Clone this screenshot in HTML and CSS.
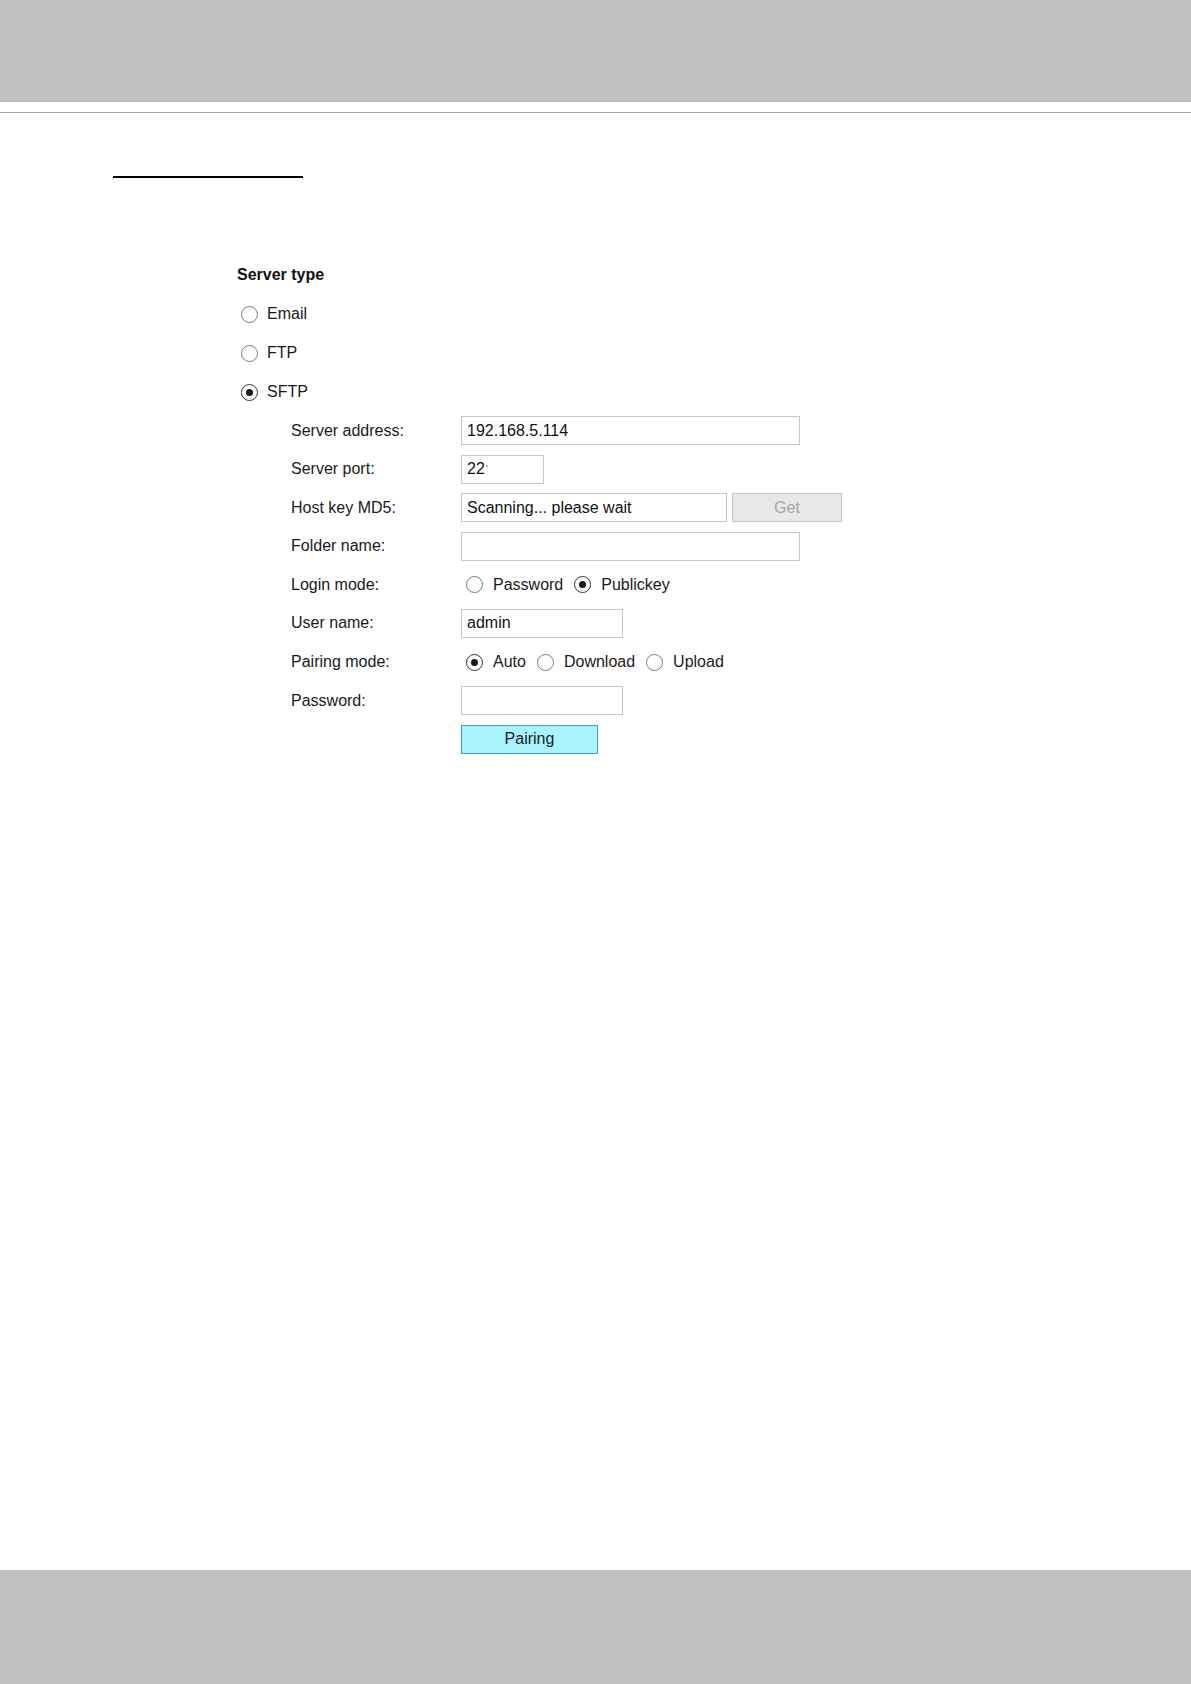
FILE: index.html
```html
<!DOCTYPE html>
<html>
<head>
<meta charset="utf-8">
<link rel="stylesheet" href="styles.css">
</head>
<body>
<div class="page">
  <div class="header"></div>
  <div class="rule"></div>
  <main class="main">
    <div class="heading-line"></div>
    <section class="server">
      <div class="title">Server type</div>
      <div class="opt"><span class="radio"></span><span class="opt-text">Email</span></div>
      <div class="opt"><span class="radio"></span><span class="opt-text">FTP</span></div>
      <div class="opt"><span class="radio on"></span><span class="opt-text">SFTP</span></div>

      <div class="form">
        <div class="label">Server address:</div>
        <div class="field"><div class="input w-long">192.168.5.114</div></div>

        <div class="label">Server port:</div>
        <div class="field"><div class="input w-port">22<span class="caret">'</span></div></div>

        <div class="label">Host key MD5:</div>
        <div class="field"><div class="input w-host">Scanning... please wait</div><div class="btn-get">Get</div></div>

        <div class="label">Folder name:</div>
        <div class="field"><div class="input w-long"></div></div>

        <div class="label">Login mode:</div>
        <div class="field radios">
          <span class="radio"></span><span class="r-text">Password</span>
          <span class="radio on"></span><span class="r-text">Publickey</span>
        </div>

        <div class="label">User name:</div>
        <div class="field"><div class="input w-short">admin</div></div>

        <div class="label">Pairing mode:</div>
        <div class="field radios">
          <span class="radio on"></span><span class="r-text">Auto</span>
          <span class="radio"></span><span class="r-text">Download</span>
          <span class="radio"></span><span class="r-text">Upload</span>
        </div>

        <div class="label">Password:</div>
        <div class="field"><div class="input w-short"></div></div>

        <div class="label"></div>
        <div class="field"><div class="btn-pair">Pairing</div></div>
      </div>
    </section>
  </main>
  <div class="footer"></div>
</div>
</body>
</html>
```
FILE: styles.css
```css
html, body {
  margin: 0;
  padding: 0;
  background: #ffffff;
}
body {
  font-family: "Liberation Sans", Arial, sans-serif;
  font-size: 16px;
  color: #1a1a1a;
}
.page {
  width: 1191px;
  height: 1684px;
  display: flex;
  flex-direction: column;
}
.header {
  height: 102px;
  background: #c0c0c0;
  border-bottom: 1px solid #b9b9b9;
  box-sizing: border-box;
}
.rule {
  margin-top: 10px;
  height: 1px;
  background: #a4a4a4;
}
.main {
  flex: 1;
}
.footer {
  height: 114px;
  background: #c0c0c0;
}
.heading-line {
  margin-left: 113px;
  margin-top: 63px;
  width: 190px;
  height: 2px;
  background: #000;
}
.server {
  margin-left: 237px;
  margin-top: 87px;
  display: flex;
  flex-direction: column;
  gap: 19px;
}
.title {
  font-weight: bold;
  height: 20px;
  line-height: 20px;
  color: #111;
}
.opt {
  height: 20px;
  display: flex;
  align-items: center;
  padding-left: 4px;
}
.opt-text {
  margin-left: 9px;
}
.radio {
  width: 17px;
  height: 17px;
  box-sizing: border-box;
  border: 1px solid #7a7a7a;
  border-radius: 50%;
  background: #fff;
  display: inline-flex;
  align-items: center;
  justify-content: center;
  flex: none;
}
.radio.on {
  border-color: #333;
}
.radio.on::after {
  content: "";
  width: 7px;
  height: 7px;
  border-radius: 50%;
  background: #1a1a1a;
}
.form {
  margin-left: 54px;
  margin-top: -5px;
  display: grid;
  grid-template-columns: 170px auto;
  grid-auto-rows: 29px;
  row-gap: 9.6px;
}
.label {
  display: flex;
  align-items: center;
  color: #1a1a1a;
}
.field {
  display: flex;
  align-items: center;
}
.input {
  height: 29px;
  box-sizing: border-box;
  border: 1px solid #c6c6c6;
  background: #fff;
  padding-left: 5px;
  display: flex;
  align-items: center;
  color: #111;
}
.caret {
  font-size: 11px;
  color: #666;
  margin-left: 1px;
  align-self: flex-start;
  margin-top: 7px;
}
.w-long { width: 339px; }
.w-port { width: 83px; }
.w-host { width: 266px; }
.w-short { width: 162px; }
.btn-get {
  margin-left: 5px;
  width: 110px;
  height: 29px;
  box-sizing: border-box;
  border: 1px solid #c4c4c4;
  background: #e8e8e8;
  color: #a6a6a6;
  display: flex;
  align-items: center;
  justify-content: center;
}
.radios {
  padding-left: 5px;
}
.r-text {
  margin-left: 10px;
  margin-right: 11px;
}
.btn-pair {
  width: 137px;
  height: 29px;
  box-sizing: border-box;
  border: 1px solid #3f9bd4;
  background: #a9f3fc;
  color: #15222e;
  display: flex;
  align-items: center;
  justify-content: center;
}
```
